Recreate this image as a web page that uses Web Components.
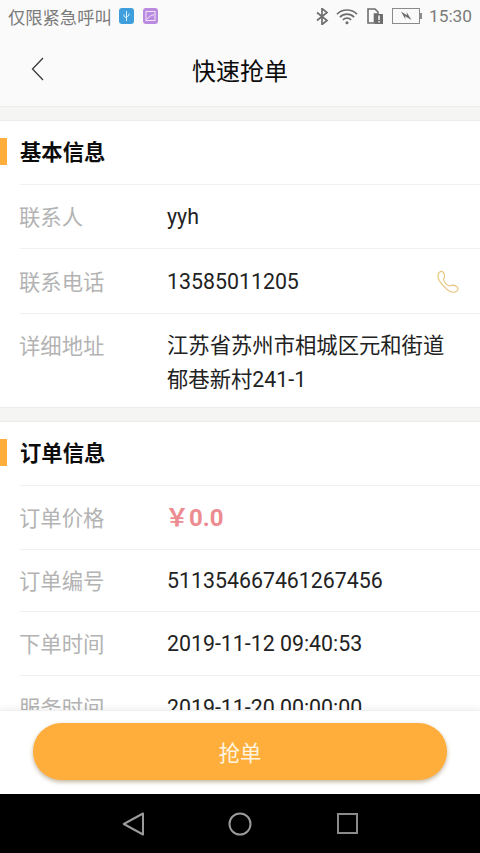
<!DOCTYPE html>
<html lang="zh">
<head>
<meta charset="utf-8">
<title>快速抢单</title>
<style>
  html, body { margin: 0; height: 100%; }
  body {
    width: 480px; height: 853px; overflow: hidden;
    display: flex; flex-direction: column;
    background: #f5f5f3;
    font-family: Roboto, "Noto Sans CJK SC", sans-serif;
  }
  .scroll { flex: 1; min-height: 0; overflow: hidden; }
</style>
</head>
<body>
<status-bar></status-bar>
<app-header>快速抢单</app-header>
<div class="scroll">
  <info-section title="基本信息">
    <info-row label="联系人">yyh</info-row>
    <info-row label="联系电话" phone>13585011205</info-row>
    <info-row label="详细地址" tall>江苏省苏州市相城区元和街道郁巷新村241-1</info-row>
  </info-section>
  <info-section title="订单信息">
    <info-row label="订单价格" price>￥0.0</info-row>
    <info-row label="订单编号" short>511354667461267456</info-row>
    <info-row label="下单时间">2019-11-12 09:40:53</info-row>
    <info-row label="服务时间">2019-11-20 00:00:00</info-row>
  </info-section>
</div>
<action-bar>抢单</action-bar>
<nav-bar></nav-bar>

<script>
// status bar at the top of the phone
class StatusBar extends HTMLElement {
  constructor() {
    super();
    this.root = this.attachShadow({mode: 'open'});
    this.root.innerHTML = `
    <style>
      :host { display: flex; align-items: center; height: 32px; padding: 0 8px; background: #fafafa; color: #7b7b7b; font-size: 17.3px; flex: none; }
      .usb, .img { width: 15px; height: 16px; display: block; }
      .left { display: flex; align-items: center; }
      .usb { margin-left: 7px; }
      .img { margin-left: 9px; }
      .right { margin-left: auto; display: flex; align-items: center; }
      .time { margin-left: 7px; }
      svg { display: block; }
    </style>
    <div class="left">
      <span>仅限紧急呼叫</span>
      <svg class="usb" viewBox="0 0 15 16"><rect width="15" height="16" rx="3" fill="#3f9fdc"/><path d="M7.500 3v10M5 6.500v1.800l2.500 1.700M10 5.500v1.800L7.500 9" fill="none" stroke="#d8f0fc" stroke-width="1"/></svg>
      <svg class="img" viewBox="0 0 15 16"><rect width="15" height="16" rx="3" fill="#b98ae0"/><rect x="3" y="3.500" width="9" height="9" fill="none" stroke="#f0e4fa" stroke-width="1"/><path d="M3.500 11.500 8 7.500l3.500-1" fill="none" stroke="#f0e4fa" stroke-width="1"/></svg>
    </div>
    <div class="right">
      <svg width="13" height="17" viewBox="0 0 13 17"><path d="M1 4.500l10 8-5 4V.5l5 4-10 8" fill="none" stroke="#6e6e6e" stroke-width="1.700"/></svg>
      <svg width="22" height="17" viewBox="0 0 24 17" style="margin-left:7px"><path d="M1 6a15.500 15.500 0 0 1 22 0M4.200 9.200a11 11 0 0 1 15.600 0M7.500 12.200a6.300 6.300 0 0 1 9 0" fill="none" stroke="#6e6e6e" stroke-width="1.800"/><circle cx="12" cy="15.300" r="1.700" fill="#6e6e6e"/></svg>
      <svg width="16" height="16" viewBox="0 0 16 16" style="margin-left:9px"><path d="M1 15V1h7l3 3v2H7.500v9z" fill="none" stroke="#6e6e6e" stroke-width="1.600"/><rect x="8" y="6" width="8" height="10" fill="#6e6e6e"/><rect x="11.300" y="7.500" width="1.500" height="4.500" fill="#fafafa"/><rect x="11.300" y="13" width="1.500" height="1.500" fill="#fafafa"/></svg>
      <svg width="30" height="16" viewBox="0 0 30 16" style="margin-left:9px"><rect x=".5" y=".5" width="27" height="15" fill="none" stroke="#8a8a8a"/><rect x="28" y="5" width="2" height="6" fill="#8a8a8a"/><path d="M9 3.500l6 3.800-.5-3.300 5 8-6.500-3.800.5 3.300z" fill="#6e6e6e"/></svg>
      <span class="time">15:30</span>
    </div>`;
  }
}
customElements.define('status-bar', StatusBar);

// title bar with back arrow
class AppHeader extends HTMLElement {
  constructor() {
    super();
    this.root = this.attachShadow({mode: 'open'});
    this.root.innerHTML = `
    <style>
      :host { display: flex; align-items: center; justify-content: center; position: relative; height: 74px; background: #fafafa; border-bottom: 1px solid #ececea; flex: none; color: #0c0c0c; font-size: 24px; }
      svg { position: absolute; left: 30px; top: 24px; }
    </style>
    <svg width="15" height="26" viewBox="0 0 15 26"><path d="M13 2 2.500 13 13 24" fill="none" stroke="#3a3a3a" stroke-width="1.300"/></svg>
    <slot></slot>`;
  }
}
customElements.define('app-header', AppHeader);

// white card with an orange mark in front of the title
class InfoSection extends HTMLElement {
  constructor() {
    super();
    this.root = this.attachShadow({mode: 'open'});
    this.root.innerHTML = `
    <style>
      :host { display: block; background: #fff; margin-top: 13px; border-top: 1px solid #ececea; border-bottom: 1px solid #ececea; }
      .head { display: flex; align-items: center; box-sizing: border-box; height: 63px; padding-bottom: 4px; margin-left: 20px; font-size: 21.33px; font-weight: 700; color: #0c0c0c; position: relative; }
      .head::before { content: ""; position: absolute; left: -20px; top: 17px; width: 7px; height: 27px; background: #ffae3b; }
    </style>
    <div class="head"></div>
    <slot></slot>`;
  }
  connectedCallback() {
    this.root.querySelector('.head').textContent = this.getAttribute('title');
  }
}
customElements.define('info-section', InfoSection);

// one label/value line
class InfoRow extends HTMLElement {
  constructor() {
    super();
    this.root = this.attachShadow({mode: 'open'});
    this.root.innerHTML = `
    <style>
      :host { display: flex; margin-left: 20px; height: 63px; border-top: 1px solid #f0f0ef; font-size: 21.33px; color: #b3b3b3; position: relative; align-items: center; }
      :host([phone]) { height: 64px; }
      :host([short]) { height: 61px; }
      :host([tall]) { height: 93px; align-items: flex-start; }
      :host([tall]) .label, :host([tall]) .value { padding-top: 15px; }
      :host([phone]) .value { padding-top: 1px; }
      .label { width: 147px; flex: none; padding-bottom: 2px; margin-left: -1px; margin-right: 1px; }
      .value { color: #222; width: 280px; line-height: 34px; }
      :host([price]) .value { color: #ec8b90; font-weight: 700; font-size: 24px; margin-left: -2px; }
      svg { position: absolute; right: 19px; top: 20px; display: none; }
      :host([phone]) svg { display: block; }
    </style>
    <span class="label"></span>
    <span class="value"><slot></slot></span>
    <svg width="26" height="26" viewBox="0 0 24 24"><path d="M3 4.500C4 2.500 6 1.500 7.500 3c1 1.200 1.500 3 1.300 4.300-.2 1.200-1 1.500-.8 2.700.7 2 3 4.700 5 5.500 1.200.4 2-.5 3.200-.6 1.500 0 3.500.8 4.500 1.800 1.300 1.500.3 3.300-1.500 4.300-3 1.300-7-.7-10.500-4.500C4.500 12.500 2 8 3 4.500z" fill="none" stroke="#e8c67e" stroke-width="1.100"/></svg>`;
  }
  connectedCallback() {
    this.root.querySelector('.label').textContent = this.getAttribute('label');
  }
}
customElements.define('info-row', InfoRow);

// fixed bottom bar with the big button
class ActionBar extends HTMLElement {
  constructor() {
    super();
    this.root = this.attachShadow({mode: 'open'});
    this.root.innerHTML = `
    <style>
      :host { display: flex; align-items: flex-start; justify-content: center; height: 84px; padding-top: 12px; box-sizing: border-box; background: #fff; flex: none; border-top: 1px solid #f0f0f0; box-shadow: 0 -3px 6px rgba(0,0,0,.05); position: relative; }
      button { width: 414px; height: 57px; border: 0; border-radius: 29px; background: #ffae3b; color: #fff5e0; font: inherit; font-size: 21.33px; box-shadow: 0 2px 4px rgba(120,90,40,.45); padding: 0; }
    </style>
    <button><slot></slot></button>`;
  }
}
customElements.define('action-bar', ActionBar);

// android navigation keys
class NavBar extends HTMLElement {
  constructor() {
    super();
    this.root = this.attachShadow({mode: 'open'});
    this.root.innerHTML = `
    <style>
      :host { display: grid; grid-template-columns: repeat(3, 107px); justify-content: center; place-items: center; height: 59px; background: #000; flex: none; }
      svg { display: block; }
    </style>
    <svg width="22" height="24" viewBox="0 0 22 24"><path d="M21 1.500 1.800 12 21 22.500z" fill="none" stroke="#9a9a9a" stroke-width="2" stroke-linejoin="round"/></svg>
    <svg width="24" height="24" viewBox="0 0 24 24"><circle cx="12" cy="12" r="10.500" fill="none" stroke="#9a9a9a" stroke-width="2"/></svg>
    <svg width="21" height="21" viewBox="0 0 21 21"><rect x="1" y="1" width="19" height="19" fill="none" stroke="#8a8a8a" stroke-width="2"/></svg>`;
  }
}
customElements.define('nav-bar', NavBar);
</script>
</body>
</html>
